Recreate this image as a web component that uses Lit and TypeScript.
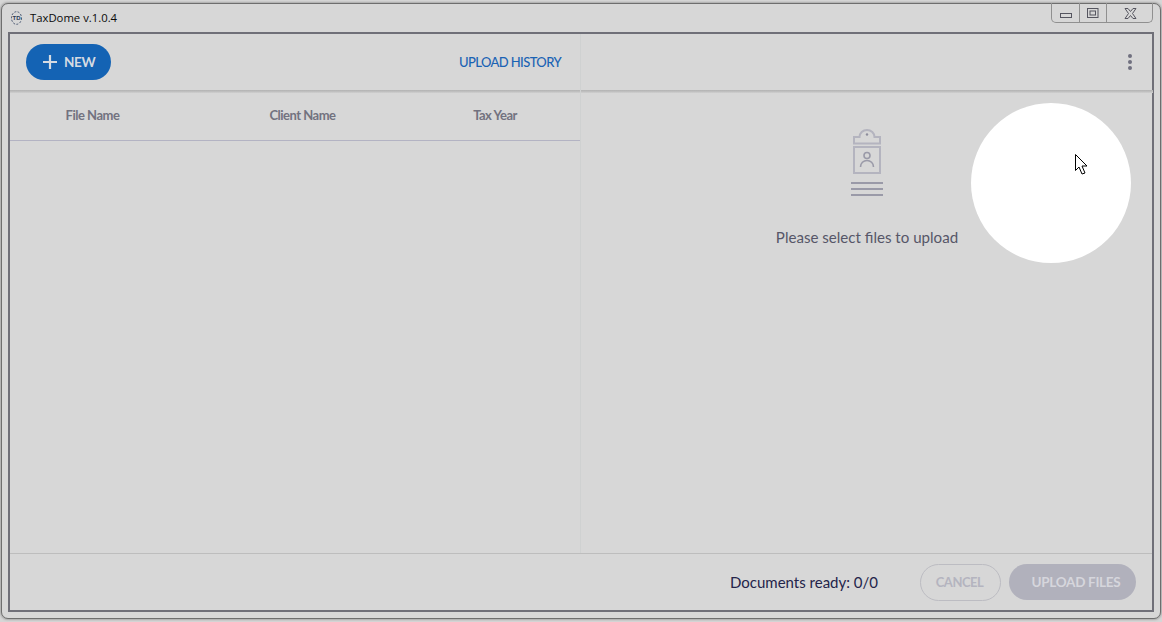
import { LitElement, html, css } from "lit";
import { customElement } from "lit/decorators.js";

@customElement("app-root")
export class AppRoot extends LitElement {
  static styles = css`
    :host { display: block; position: relative; width: 1162px; height: 622px; overflow: hidden; background: #d6d6d6; font-family: Lato, sans-serif; }
    .window { box-sizing: border-box; width: 1160px; height: 616px; margin: 3px 0 0 1px; border: 1px solid #6e6e6e; border-radius: 7px; box-shadow: 0 0 2px 1px #a8a8a8; background: #d7d7d7; display: flex; flex-direction: column; padding: 0 6px 6px 6px; }
    .titlebar { height: 28px; flex: none; display: flex; align-items: center; gap: 8px; padding-left: 3px; font: 11.3px/14px "Open Sans", sans-serif; color: #0a0a0a; }
    .frame { flex: 1; min-height: 0; border: 2px solid #6f6f78; display: flex; flex-direction: column; box-sizing: border-box; }
    .main { flex: 1; min-height: 0; display: grid; grid-template-columns: 571px 1fr; }
    .left { display: flex; flex-direction: column; border-right: 1px solid #cfd1d1; }
    .right { display: flex; flex-direction: column; }
    .toolbar { flex: none; box-sizing: border-box; height: 59px; background: linear-gradient(#b2b2b2, #bfbfbf 50%, #d0d0d0) bottom / 100% 3px no-repeat; display: flex; align-items: center; justify-content: space-between; }
    .left .toolbar { padding: 0 19px 3px 16px; }
    .right .toolbar { padding: 0 21px 3px 0; justify-content: flex-end; }
    .new { display: flex; align-items: center; gap: 7px; width: 85px; height: 36px; box-sizing: border-box; padding-left: 17px; border-radius: 18px; background: #1463b4; color: #d6dbe2; font-weight: 700; font-size: 13.5px; letter-spacing: -0.3px; }
    .history { color: #1a63b4; font-size: 13px; font-weight: 500; letter-spacing: -0.6px; }
    .dots { display: flex; flex-direction: column; gap: 2px; }
    .dots i { display: block; width: 4px; height: 4px; border-radius: 50%; background: #70707f; }
    .thead { height: 48px; flex: none; box-sizing: border-box; border-bottom: 1px solid #b3b3c3; display: grid; grid-template-columns: 165px 255px 130px; align-items: center; text-align: center; color: #72727f; font-size: 13px; font-weight: 700; letter-spacing: -0.5px; padding-bottom: 4px; }
    .empty { flex: 1; display: flex; flex-direction: column; align-items: center; padding: 35px 0 0 0; width: 572px; }
    .empty p { margin: 29px 0 0 0; font-size: 15.1px; line-height: 20px; color: #565668; }
    .footer { height: 57px; flex: none; box-sizing: border-box; border-top: 1px solid #bdbdbd; display: flex; align-items: center; justify-content: flex-end; padding: 0 16px 0 0; }
    .ready { font-size: 15px; color: #24244a; margin-right: 42px; }
    .cancel { width: 81px; height: 37px; box-sizing: border-box; border: 1px solid #bcbcc2; border-radius: 19px; display: flex; align-items: center; justify-content: center; color: #b4b4bf; font-weight: 700; font-size: 13px; letter-spacing: -0.5px; margin-right: 8px; padding-right: 2px; }
    .upload { width: 127px; height: 36px; box-sizing: border-box; padding-left: 7px; border-radius: 18px; background: #b1b1bc; display: flex; align-items: center; justify-content: center; color: #d6d6dc; font-weight: 700; font-size: 13.5px; letter-spacing: -0.3px; }
    .controls { position: absolute; left: 1051px; top: 3px; width: 102px; height: 20px; box-sizing: border-box; border: 1px solid #909090; border-top: none; border-radius: 0 0 5px 5px; display: grid; grid-template-columns: 27px 27px 1fr; }
    .controls div { position: relative; border-left: 1px solid #909090; }
    .controls div:first-child { border-left: none; }
    .controls svg { position: absolute; }
    .min svg { left: 8px; top: 10px; }
    .max svg { left: 7px; top: 5px; }
    .close svg { left: 17px; top: 5px; }
    .spot { position: absolute; left: 970.5px; top: 103px; width: 160px; height: 160px; border-radius: 50%; background: #fff; }
    .cursor { position: absolute; left: 1075px; top: 154px; }
  `;

  render() {
    return html`
      <div class="window">
        <div class="titlebar">
          <svg width="11" height="14" viewBox="0 0 11 14">
            <ellipse cx="5.500" cy="7" rx="5" ry="6.300" fill="none" stroke="#3a4a66" stroke-width="0.9" stroke-dasharray="2 1.4"></ellipse>
            <text x="5.500" y="9" font-size="6" font-weight="700" text-anchor="middle" fill="#2a3a55" font-family="Liberation Sans">TD</text>
          </svg>
          <span>TaxDome v.1.0.4</span>
        </div>
        <div class="frame">
          <div class="main">
            <div class="left">
              <div class="toolbar">
                <div class="new">
                  <svg width="14" height="14" viewBox="0 0 14 14"><path d="M7 0v14M0 7h14" stroke="#d6dbe2" stroke-width="2.200" fill="none"></path></svg>
                  NEW
                </div>
                <div class="history">UPLOAD HISTORY</div>
              </div>
              <div class="thead"><div>File Name</div><div>Client Name</div><div>Tax Year</div></div>
            </div>
            <div class="right">
              <div class="toolbar"><div class="dots"><i></i><i></i><i></i></div></div>
              <div class="empty">
                <svg width="34" height="70" viewBox="0 0 34 70">
                  <g fill="none" stroke="#b4b4bf" stroke-width="2">
                    <path d="M4 9h5.500a7.500 7 0 0 1 15 0H30v6.500H4z"></path>
                    <rect x="4" y="19" width="26" height="26"></rect>
                  </g>
                  <circle cx="17" cy="6.500" r="1.200" fill="#8d8d9c"></circle>
                  <g fill="none" stroke="#9a9aa8" stroke-width="1.600">
                    <circle cx="17" cy="27.500" r="3"></circle>
                    <path d="M10.500 39c0-4 3-6.500 6.500-6.500s6.500 2.500 6.500 6.500"></path>
                  </g>
                  <path d="M1 55h32M1 61h32M1 67h32" stroke="#9a9aa8" stroke-width="2"></path>
                </svg>
                <p>Please select files to upload</p>
              </div>
            </div>
          </div>
          <div class="footer">
            <div class="ready">Documents ready: 0/0</div>
            <div class="cancel">CANCEL</div>
            <div class="upload">UPLOAD FILES</div>
          </div>
        </div>
      </div>
      <div class="controls">
        <div class="min"><svg width="13" height="5" viewBox="0 0 13 5"><rect x="0.500" y="0.500" width="11" height="4" fill="none" stroke="#55555f"></rect></svg></div>
        <div class="max"><svg width="12" height="11" viewBox="0 0 12 11"><rect x="0.500" y="0.500" width="10.500" height="9" fill="none" stroke="#55555f"></rect><rect x="3" y="3" width="5.500" height="4" fill="none" stroke="#55555f"></rect></svg></div>
        <div class="close"><svg width="13" height="11" viewBox="0 0 13 11"><path d="M1 .5h3l2.500 3 2.500-3h3L8.500 5.500l3.500 5h-3L6.500 7.500 4 10.500H1l3.500-5z" fill="#d7d7d7" stroke="#55555f"></path></svg></div>
      </div>
      <div class="spot"></div>
      <svg class="cursor" width="14" height="23" viewBox="0 0 14 23">
        <path d="M.5.500v16l3.500-3.500 3 7 3-1-3-7h5z" fill="#fff" stroke="#000"></path>
      </svg>
    `;
  }
}
